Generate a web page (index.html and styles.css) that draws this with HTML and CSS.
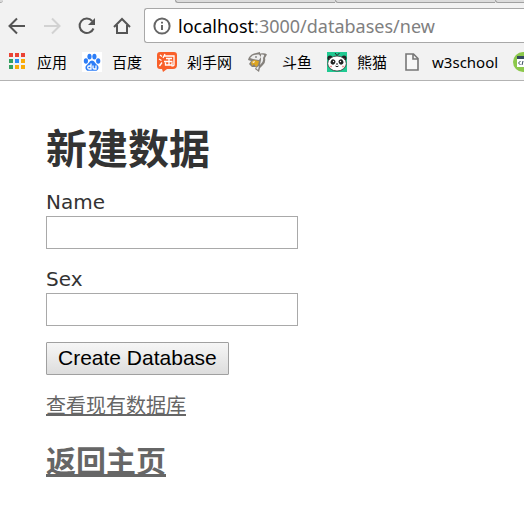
FILE: index.html
```html
<!DOCTYPE html>
<html lang="zh-CN">
<head>
<meta charset="utf-8">
<title>新建数据</title>
<link rel="stylesheet" href="styles.css">
</head>
<body>
<header class="browser">
  <div class="tabs"><span class="tab-edge"></span><span class="tab-active"></span><span class="tab"></span><span class="tab"></span><span class="tab tab-last"></span></div>
  <div class="toolbar">
    <button class="nav" type="button" aria-label="Back"><svg viewBox="0 0 20 20"><path d="M18 10H3M10 2.500L2.500 10L10 17.500"/></svg></button>
    <button class="nav nav-off" type="button" aria-label="Forward" disabled><svg viewBox="0 0 20 20"><path d="M2 10H17M10 2.500L17.500 10L10 17.500"/></svg></button>
    <button class="nav" type="button" aria-label="Reload"><svg viewBox="0 0 20 20"><path d="M16.500 12.500A7.200 7.200 0 1 1 15.200 5"/><path class="solid" d="M18 2V9H11Z"/></svg></button>
    <button class="nav" type="button" aria-label="Home"><svg viewBox="0 0 20 20"><path d="M2 11L10 3L18 11M5 9V17H15V9"/></svg></button>
    <div class="address">
      <svg class="info" viewBox="0 0 18 18"><circle cx="9" cy="9" r="7.600"/><path d="M9 8V13M9 4.800V6.600"/></svg>
      <span class="url"><span class="host">localhost</span>:3000/databases/new</span>
    </div>
  </div>
  <nav class="bookmarks">
    <a class="bookmark" href="#"><svg viewBox="0 0 20 20"><g fill="#ea4335"><path d="M2 1h4v4H2zM8 1h4v4H8zM14 1h4v4h-4z"/></g><path fill="#34a060" d="M2 7h4v4H2zM2 13h4v4H2z"/><path fill="#2a8cf0" d="M8 7h4v4H8z"/><path fill="#f9ab08" d="M14 7h4v4h-4zM8 13h4v4H8zM14 13h4v4h-4z"/></svg>应用</a>
    <a class="bookmark" href="#"><svg viewBox="0 0 20 20"><path fill="#fff" d="M0 0h20v20H0z"/><g fill="#2c7df7"><ellipse cx="3.900" cy="9" rx="2.100" ry="2.800"/><ellipse cx="7.500" cy="4.600" rx="2.100" ry="2.900"/><ellipse cx="12.400" cy="4.600" rx="2.100" ry="2.900"/><ellipse cx="16.200" cy="9" rx="2.100" ry="2.800"/><path d="M10 8.500C7.500 8.500 7 11.500 4.500 13.200C2.500 15 3.500 19 6.800 18.800H13.200C16.500 19 17.500 15 15.500 13.200C13 11.500 12.500 8.500 10 8.500Z"/></g><path fill="none" stroke="#fff" stroke-width="1.300" d="M9 11.500V17H7Q5.700 17 5.700 15.500T7 14H9M11 13.500V16Q11 17 12.500 17H14V13.500"/></svg>百度</a>
    <a class="bookmark" href="#"><svg viewBox="0 0 20 20"><path fill="#f9602a" d="M3 0H17Q20 0 20 3V13Q20 17 16 17H10L6 20L5 17H3Q0 17 0 14V3Q0 0 3 0Z"/><path fill="none" stroke="#fff" stroke-width="1.300" d="M3 3L5 4.500M2 7L4.500 8.500M2.500 14L5 10.500M8 2L6 6M7 4H17V13Q17 14 14.500 14M9 6.500H15M7 9.500H15.500M12 6.500V13M8.500 10.500V13H15V10.500"/></svg>剁手网</a>
    <a class="bookmark" href="#"><svg viewBox="0 0 20 20"><path fill="#85817c" d="M1 8Q2 3 7 1.500L13 0V1.500Q18 0.500 20 2.500L18 6Q19 10 16 13L13 16L12 20L8 17L9 15L5 15L2 12L4 9Z"/><path fill="#ededed" d="M3 6Q6 2 12 2.500L14 5L12 8L6 7ZM14 2.500Q18 2 17 4L16 6Q17 10 13 13L14 8ZM9 16L12 14L11 18Z"/><path fill="#dda521" d="M4 10L7 8L12 9L11 13L9 15L7 12L5 14Z"/><path fill="#fff" d="M5 10L8 9L7 11Z"/><circle fill="#444" cx="9" cy="5" r=".8"/></svg><span class="indent">斗鱼</span></a>
    <a class="bookmark" href="#"><svg viewBox="0 0 20 20"><path fill="#20ca92" d="M0 0h20v20H0z"/><circle cx="3" cy="6" r="2.600" fill="#222"/><circle cx="17" cy="6" r="2.600" fill="#222"/><ellipse cx="10" cy="11.500" rx="9.300" ry="7.500" fill="#fff" stroke="#333" stroke-width=".8"/><ellipse cx="6" cy="10" rx="2.300" ry="2.600" fill="#222" transform="rotate(30 6 10)"/><ellipse cx="14" cy="10" rx="2.300" ry="2.600" fill="#222" transform="rotate(-30 14 10)"/><path fill="none" stroke="#222" d="M8 1L10 3.500L12.500 1M8.500 14Q10 15.500 11.500 14M9 12H11"/><circle cx="6.500" cy="9.500" r=".7" fill="#fff"/><circle cx="13.500" cy="9.500" r=".7" fill="#fff"/><path stroke="#f09a9a" stroke-width="1.500" d="M2.500 14.500H5M15 14.500H17.500"/></svg>熊猫</a>
    <a class="bookmark" href="#"><svg viewBox="0 0 20 20"><path fill="#f8f8f8" stroke="#777" stroke-width="1.600" d="M4 2H11.500L16 6.500V18H4ZM11 2V7H16"/></svg>w3school</a>
    <a class="bookmark" href="#" aria-label="Code"><svg viewBox="0 0 20 20"><circle cx="10" cy="10" r="10" fill="#8cc84b"/><path fill="#fff" d="M4 5h13v10H4z"/><path fill="#34495e" d="M4 4h13v3H4z"/><path fill="none" stroke="#34495e" d="M7.500 9L5.500 11L7.500 13M9 13L10 9"/></svg></a>
  </nav>
</header>
<main class="page">
  <h1 class="title">新建数据</h1>
  <form class="form">
    <div class="field"><label for="name">Name</label><input id="name" type="text"></div>
    <div class="field"><label for="sex">Sex</label><input id="sex" type="text"></div>
    <button class="submit" type="button">Create Database</button>
  </form>
  <a class="link" href="#">查看现有数据库</a>
  <h2 class="home"><a class="link" href="#">返回主页</a></h2>
</main>
</body>
</html>
```
FILE: styles.css
```css
* { box-sizing: border-box; }
body {
  margin: 0;
  background: #fff;
  color: #333;
  font-family: "DejaVu Sans", "Noto Sans CJK SC", sans-serif;
  font-size: 20px;
  line-height: 28px;
}
.browser {
  background: #f2f2f2;
  border-bottom: 1px solid #b3b3b3;
  overflow: hidden;
}
.tabs { display: flex; height: 3px; }
.tab-edge { width: 3px; background: #d9d9d9; border-bottom: 1px solid #a8a8a8; border-radius: 0 0 3px 0; }
.tab-active { width: 172px; }
.tab {
  width: 160px;
  background: #dcdcdc;
  border-left: 1px solid #a0a0a0;
  border-bottom: 1px solid #a0a0a0;
  border-radius: 0 0 0 3px;
}
.tab-last { flex: 1; }
.toolbar { display: flex; align-items: center; padding: 5px 0 0 7px; }
.nav {
  width: 20px;
  height: 20px;
  margin-right: 15px;
  padding: 0;
  border: 0;
  background: none;
  flex: none;
}
.nav svg { display: block; fill: none; stroke: #555; stroke-width: 2; }
.nav-off svg { stroke: #d2d2d2; }
.nav .solid { fill: #555; stroke: none; }
.nav:nth-of-type(4) { margin-right: 12px; }
.address {
  flex: 1;
  display: flex;
  align-items: center;
  gap: 7px;
  height: 35px;
  padding-left: 8px;
  background: #fff;
  border: 1px solid #a8a8a8;
  border-right: 0;
  border-radius: 3px 0 0 3px;
  white-space: nowrap;
}
.info { width: 18px; height: 18px; fill: none; stroke: #666; stroke-width: 2; }
.url { color: #808080; font-family: "Noto Sans", sans-serif; font-size: 18px; }
.host { color: #000; }
.bookmarks { display: flex; gap: 15px; height: 37px; padding: 0 0 0 7px; align-items: center; }
.bookmark {
  display: flex;
  align-items: center;
  gap: 10px;
  flex: none;
  color: #000;
  font-family: "Noto Sans", "Noto Sans CJK SC", sans-serif;
  font-size: 15px;
  line-height: 20px;
  text-decoration: none;
}
.bookmark svg { width: 20px; height: 20px; }
.indent { padding-left: 5px; }
.page { padding: 36px 46px; }
.title {
  margin: 0 0 13px;
  font-family: "Noto Sans CJK SC", sans-serif;
  font-size: 41px;
  line-height: 58px;
}
.field { margin-bottom: 16px; }
.field label { display: block; }
.field input {
  display: block;
  width: 252px;
  max-width: 100%;
  height: 33px;
  padding: 2px 4px;
  border: 1px solid #a9a9a9;
  font: inherit;
}
.submit {
  display: block;
  height: 33px;
  margin-bottom: 16px;
  padding: 0 11px 2px;
  border: 1px solid #a0a0a0;
  border-radius: 1px;
  background: linear-gradient(#f6f6f6, #dddddd);
  color: #000;
  font-family: "Liberation Sans", sans-serif;
  font-size: 21px;
}
.link { color: #666; font-family: "Noto Sans CJK SC", sans-serif; }
.home { margin: 16px 0 0; font-size: 30px; line-height: 46px; }
```
